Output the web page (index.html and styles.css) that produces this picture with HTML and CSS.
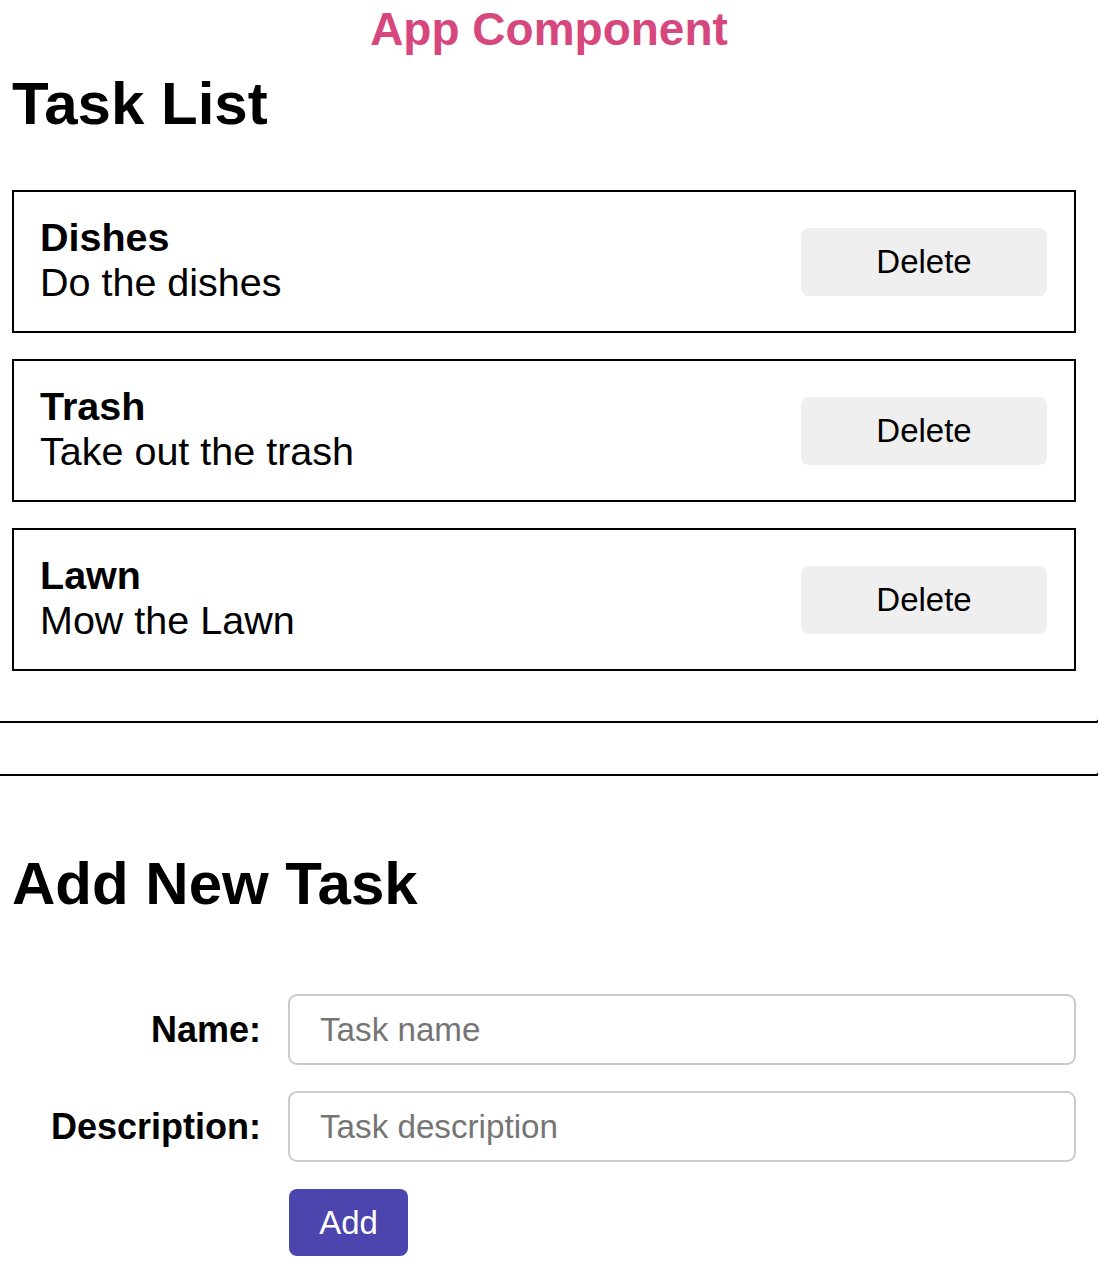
FILE: index.html
```html
<!DOCTYPE html>
<html lang="en">
<head>
<meta charset="utf-8">
<title>App Component</title>
<link rel="stylesheet" href="styles.css">
</head>
<body>
<div class="app-title">App Component</div>

<section class="task-list">
  <h1 class="heading">Task List</h1>
  <div class="cards">
    <div class="card">
      <div class="card-text">
        <div class="card-title">Dishes</div>
        <div class="card-desc">Do the dishes</div>
      </div>
      <button class="btn-delete" type="button">Delete</button>
    </div>
    <div class="card">
      <div class="card-text">
        <div class="card-title">Trash</div>
        <div class="card-desc">Take out the trash</div>
      </div>
      <button class="btn-delete" type="button">Delete</button>
    </div>
    <div class="card">
      <div class="card-text">
        <div class="card-title">Lawn</div>
        <div class="card-desc">Mow the Lawn</div>
      </div>
      <button class="btn-delete" type="button">Delete</button>
    </div>
  </div>
</section>

<div class="divider divider-first"></div>
<div class="divider divider-second"></div>

<section class="add-task">
  <h1 class="heading heading-add">Add New Task</h1>
  <form class="task-form">
    <label class="form-label" for="name">Name:</label>
    <input class="form-input" id="name" type="text" placeholder="Task name">
    <label class="form-label" for="desc">Description:</label>
    <input class="form-input" id="desc" type="text" placeholder="Task description">
    <div class="form-actions">
      <button class="btn-add" type="button">Add</button>
    </div>
  </form>
</section>
</body>
</html>
```

FILE: styles.css
```css
* {
  box-sizing: border-box;
}

html, body {
  margin: 0;
  padding: 0;
  background: #ffffff;
}

body {
  font-family: "Liberation Sans", Arial, Helvetica, sans-serif;
  color: #000000;
  width: 1098px;
  overflow: hidden;
}

.app-title {
  text-align: center;
  color: #d6487d;
  font-weight: bold;
  font-size: 46px;
  line-height: 52px;
  margin-top: 3px;
}

.task-list {
  padding: 0 22px 0 12px;
}

.heading {
  margin: 0;
  font-size: 60px;
  line-height: 60px;
  font-weight: bold;
}

.task-list .heading {
  margin-top: 19px;
}

.cards {
  margin-top: 56px;
  display: flex;
  flex-direction: column;
  gap: 26px;
}

.card {
  display: flex;
  align-items: center;
  justify-content: space-between;
  height: 143px;
  border: 2px solid #000000;
  padding: 0 27px 0 26px;
}

.card-text {
  padding-bottom: 4px;
  font-size: 39.5px;
  line-height: 45px;
}

.card-title {
  font-weight: bold;
}

.btn-delete {
  width: 246px;
  height: 68px;
  border: none;
  border-radius: 8px;
  background: #efefef;
  color: #000000;
  font-family: "Liberation Sans", Arial, Helvetica, sans-serif;
  font-size: 33px;
  padding: 0;
}

.divider {
  width: 1100px;
  height: 4px;
  border-bottom: 2px solid #000000;
  border-right: 2px solid #000000;
  border-bottom-right-radius: 4px;
}

.divider-first {
  margin-top: 48px;
}

.divider-second {
  margin-top: 49px;
}

.add-task {
  padding: 0 22px 0 12px;
}

.heading-add {
  margin-top: 78px;
}

.task-form {
  margin-top: 80px;
  display: grid;
  grid-template-columns: 249px 1fr;
  column-gap: 27px;
  row-gap: 26px;
  align-items: center;
}

.form-label {
  text-align: right;
  font-weight: bold;
  font-size: 36px;
}

.form-input {
  height: 71px;
  width: 100%;
  border: 2px solid #cccccc;
  border-radius: 9px;
  padding: 0 0 0 30px;
  font-family: "Liberation Sans", Arial, Helvetica, sans-serif;
  font-size: 33.2px;
  color: #000000;
  outline: none;
}

.form-input::placeholder {
  color: #757575;
}

.form-actions {
  grid-column: 2;
  margin-top: 1px;
}

.btn-add {
  width: 119px;
  height: 67px;
  border: none;
  border-radius: 8px;
  background: #4d45ae;
  color: #ffffff;
  font-family: "Liberation Sans", Arial, Helvetica, sans-serif;
  font-size: 33px;
  padding: 0;
  margin-left: 1px;
}
```
